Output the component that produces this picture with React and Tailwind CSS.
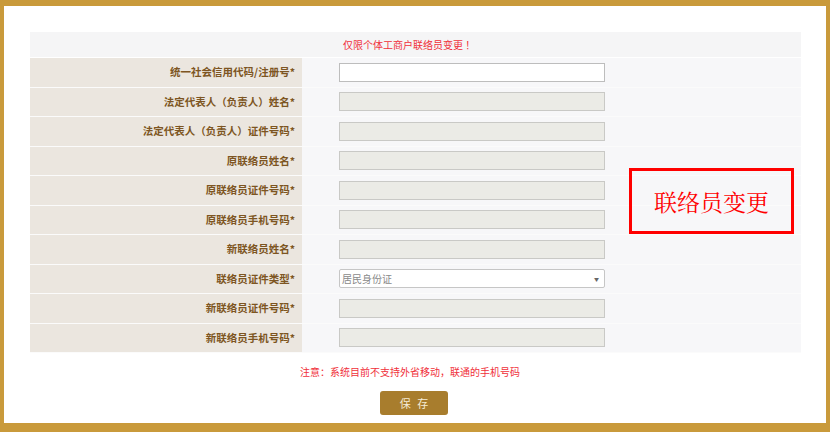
const rows = [
  { label: '统一社会信用代码/注册号*', kind: 'input' },
  { label: '法定代表人（负责人）姓名*', kind: 'disabled' },
  { label: '法定代表人（负责人）证件号码*', kind: 'disabled' },
  { label: '原联络员姓名*', kind: 'disabled' },
  { label: '原联络员证件号码*', kind: 'disabled' },
  { label: '原联络员手机号码*', kind: 'disabled' },
  { label: '新联络员姓名*', kind: 'disabled' },
  { label: '联络员证件类型*', kind: 'select' },
  { label: '新联络员证件号码*', kind: 'disabled' },
  { label: '新联络员手机号码*', kind: 'disabled' },
]

const FONT = "font-['Noto_Sans_CJK_SC',sans-serif]"

function Field({ kind }) {
  if (kind === 'input') {
    return <div className="w-[266px] h-[19px] bg-white border border-[#bdbdbd]" />
  }
  if (kind === 'select') {
    return (
      <div className="w-[266px] h-[19px] bg-white border border-[#c6c6c6] rounded-[2px] flex items-center justify-between pl-[2px] pr-[5px]">
        <span className="text-[10px] leading-none text-[#8a8a8a]">居民身份证</span>
        <span className="text-[5px] leading-none text-[#666]">▼</span>
      </div>
    )
  }
  return <div className="w-[266px] h-[19px] bg-[#ebebe6] border border-[#c9c9c6]" />
}

export default function App() {
  return (
    <div className={`relative w-[830px] h-[432px] bg-white border-t-[6px] border-x-4 border-b-[9px] border-[#c99a3b] ${FONT}`}>
      <div className="pt-[26px] pl-[26px]">
        <div className="w-[771px]">
          {/* header row */}
          <div className="flex h-[26px] bg-[#f5f5f6] border-b border-white">
            <div className="w-[272px]" />
            <div className="flex items-center pl-[41px] text-[10px] text-[#f0303a]">
              仅限个体工商户联络员变更 ！
            </div>
          </div>

          {rows.map((r) => (
            <div key={r.label} className="flex h-[29.5px] border-b border-[#fbfbfb]">
              <div className="w-[272px] bg-[#ebe6df] flex items-center justify-end pr-[7px] text-[10.5px] font-bold text-[#7d5522]">
                {r.label}
              </div>
              <div className="flex-1 bg-[#f7f7f9] flex items-center pl-[37px]">
                <Field kind={r.kind} />
              </div>
            </div>
          ))}
        </div>

        <p className="mt-[13px] ml-[270px] text-[10px] leading-[12px] text-[#f0303a]">
          注意：系统目前不支持外省移动，联通的手机号码
        </p>

        <button className="mt-[13px] ml-[350px] w-[68px] h-[24px] rounded-[3px] bg-[#a87d2d] text-[11px] text-[#f6ecd6] tracking-[2px] pl-[2px]">
          保 存
        </button>
      </div>

      {/* annotation overlay */}
      <div className="absolute left-[625px] top-[162px] w-[165px] h-[66px] border-[3px] border-[#ff0000] flex items-center justify-center">
        <span className="text-[23px] leading-none text-[#ff0000] font-['Noto_Serif_CJK_SC','Noto_Sans_CJK_SC',serif]">
          联络员变更
        </span>
      </div>
    </div>
  )
}
